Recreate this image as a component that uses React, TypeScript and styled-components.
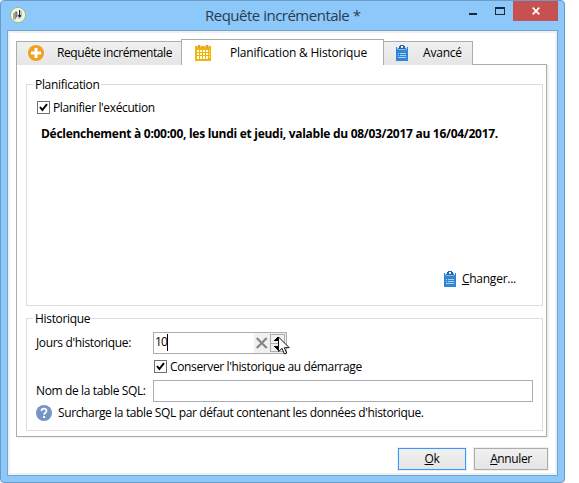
import React from 'react';
import styled, { createGlobalStyle } from 'styled-components';

const GlobalStyle = createGlobalStyle`
  *, *::before, *::after { box-sizing: border-box; }
  body { margin: 0; background: #fff; overflow: hidden; font: 12px/16px "Open Sans", "Noto Sans", sans-serif; color: #000; }
  svg { display: block; flex: none; }
`;

const Window = styled.main`
  width: 565px;
  height: 483px;
  padding: 0 6px 6px;
  display: flex;
  flex-direction: column;
  background: #8dc8fa;
  border: 1px solid #6c9bc4;
  border-radius: 4px;
`;

const TitleBar = styled.header`
  flex: none;
  height: 29px;
  display: flex;
  align-items: flex-start;
`;

const AppIcon = styled.div`
  width: 60px;
  padding: 5px 0 0 2px;
`;

const Title = styled.h1`
  flex: 1;
  margin: 0;
  padding: 4px 0 0 138px;
  font-size: 15px;
  line-height: 20px;
  font-weight: 400;
  letter-spacing: -0.5px;
  color: #2b3d4d;
  white-space: nowrap;
`;

const Controls = styled.div`
  display: flex;
`;

const ControlButton = styled.button<{ $w: number; $close?: boolean }>`
  width: ${p => p.$w}px;
  height: 20px;
  padding: 0;
  border: 0;
  display: flex;
  align-items: center;
  justify-content: center;
  background: ${p => (p.$close ? '#c75050' : 'transparent')};
`;

const Client = styled.section`
  flex: 1;
  min-height: 0;
  display: flex;
  flex-direction: column;
  border: 1px solid #70a5d2;
  box-shadow: inset 0 0 0 2px #f0f0f0;
  background: #fff;
  padding: 8px 0 0 8px;
`;

const Tabs = styled.nav`
  height: 26px;
  display: flex;
  align-items: flex-end;
`;

const Tab = styled.div<{ $w: number; $active?: boolean; $gap: number; $pad: number }>`
  width: ${p => p.$w}px;
  height: ${p => (p.$active ? 26 : 24)}px;
  padding: 0 0 ${p => (p.$active ? 0 : 1)}px ${p => p.$pad}px;
  align-self: ${p => (p.$active ? 'flex-start' : 'flex-end')};
  display: flex;
  align-items: center;
  gap: ${p => p.$gap}px;
  border: 1px solid #acacac;
  border-bottom-width: 0;
  background: ${p => (p.$active ? '#fff' : 'linear-gradient(#f0f0f0, #e5e5e5)')};
  z-index: ${p => (p.$active ? 1 : 0)};

  & + & { margin-left: -1px; }
`;

const Panel = styled.div`
  width: 531px;
  height: 373px;
  margin-top: -1px;
  padding: 12px 3px 0 9px;
  display: flex;
  flex-direction: column;
  gap: 5px;
  border: 1px solid #acacac;
  box-shadow: 2px 1px 0 #f0f0f0;
  background: #fff;
`;

const Group = styled.fieldset<{ $h: number; $top: number }>`
  min-width: 0;
  height: ${p => p.$h}px;
  margin: 0;
  padding: ${p => p.$top}px 9px 0;
  border: 1px solid #dcdcdc;
`;

const Legend = styled.legend`
  height: 15px;
  line-height: 15px;
  margin-left: -3px;
  padding: 0 1px 0 2px;
  letter-spacing: -0.32px;
  white-space: nowrap;
`;

const Text = styled.span<{ $track?: number; $bold?: boolean; $w?: number }>`
  display: block;
  flex: none;
  width: ${p => (p.$w ? `${p.$w}px` : 'auto')};
  letter-spacing: ${p => p.$track ?? -0.37}px;
  font-weight: ${p => (p.$bold ? 700 : 400)};
  white-space: nowrap;
`;

const CheckRow = styled.label<{ $indent: number }>`
  height: 13px;
  margin-left: ${p => p.$indent}px;
  display: flex;
  align-items: center;
  gap: 3px;
`;

const CheckBox = styled.span`
  width: 13px;
  height: 13px;
  border: 1px solid #707070;
  background: #fff;
`;

const Schedule = styled.div`
  height: 150px;
  padding: 12px 0 0 5px;
`;

const LinkButton = styled.button`
  margin: 7px 17px 0 auto;
  padding: 0;
  height: 16px;
  display: flex;
  align-items: center;
  gap: 6px;
  border: 0;
  background: none;
  font: inherit;
  color: inherit;
`;

const Field = styled.div<{ $mt?: number; $mb: number }>`
  height: 22px;
  margin-top: ${p => p.$mt ?? 0}px;
  margin-bottom: ${p => p.$mb}px;
  display: flex;
  align-items: center;
`;

const Entry = styled.div<{ $w: number }>`
  width: ${p => p.$w}px;
  height: 22px;
  display: flex;
  border: 1px solid #abadb3;
  background: #fff;
`;

const EntryValue = styled.span`
  height: 17px;
  margin: 1px auto 0 1px;
  letter-spacing: -0.8px;
  border-right: 1px solid #000;
`;

const SpinArea = styled.div`
  position: relative;
  width: 32px;
  display: flex;
  padding: 1px 1px 1px 2px;
  gap: 2px;
  background: #f0f0f0;
`;

const ClearBox = styled.div`
  width: 12px;
  display: flex;
  align-items: center;
`;

const Spinner = styled.div`
  width: 15px;
  height: 18px;
  display: grid;
  grid-template-rows: 1fr 1fr;
  border: 1px solid #acacac;
  background: #f0f0f0;
`;

const SpinHalf = styled.div`
  display: flex;
  align-items: center;
  justify-content: center;
  & + & { border-top: 1px solid #acacac; }
`;

const Pointer = styled.div`
  position: absolute;
  left: 24px;
  top: 3px;
  z-index: 2;
`;

const HelpRow = styled.div`
  height: 16px;
  display: flex;
  align-items: center;
  gap: 6px;
`;

const Footer = styled.footer`
  display: flex;
  justify-content: flex-end;
  gap: 8px;
  padding: 11px 9px 0 0;
`;

const PushButton = styled.button<{ $w: number; $primary?: boolean }>`
  width: ${p => p.$w}px;
  height: 22px;
  padding: 0;
  display: flex;
  align-items: center;
  justify-content: center;
  border: 1px solid ${p => (p.$primary ? '#3399ff' : '#acacac')};
  box-shadow: 0 0 0 1px #f0f0f0;
  background: linear-gradient(#f0f0f0, #e5e5e5);
  font: inherit;
  color: inherit;
`;

const LogoIcon = () => (
  <svg width="18" height="18" viewBox="0 0 18 18">
    <circle cx="9" cy="9" r="7.6" fill="#f2f4ef" stroke="#9bc365" />
    <path d="M4 7.5l3-2v8H4z" fill="#a3a8a4" />
    <path d="M6.5 5.5h1.8v5l-1.8 2z" fill="#6f7573" />
    <path d="M10.6 4v7M9 9.2l1.6 1.8L12.3 9.200" fill="none" stroke="#222d30" strokeWidth="1.200" />
    <path d="M12.6 5v5.500M8.500 12h4" fill="none" stroke="#b5bcb6" />
  </svg>
);

const PlusIcon = () => (
  <svg width="16" height="16" viewBox="0 0 16 16">
    <circle cx="8" cy="8" r="8" fill="#f0a023" />
    <path d="M6.5 3h3v3.5H13v3H9.5V13h-3V9.5H3v-3h3.5z" fill="#fff" />
  </svg>
);

const CalendarIcon = () => (
  <svg width="16" height="16" viewBox="0 0 16 16" shapeRendering="crispEdges">
    <path d="M0 1h16v15H0z" fill="#eeb60a" />
    <path d="M2 0h4v2H5v1H3V2H2zM10 0h4v2h-1v1h-2V2h-1z" fill="#f7dfb0" />
    <path d="M3 0h2v3H3zM11 0h2v3h-2z" fill="#e9983a" />
    {[5, 8, 11, 13].map(y => [2, 5, 8, 11].map(x => (
      <rect key={`${x}-${y}`} x={x} y={y} width="2" height={y === 13 ? 1 : 2} fill="#fffbe8" />
    )))}
    <path d="M14 5h1v2h-1zM14 8h1v2h-1zM14 11h1v2h-1z" fill="#f8df88" />
  </svg>
);

const ClipboardIcon = () => (
  <svg width="12" height="16" viewBox="0 0 12 16" shapeRendering="crispEdges">
    <path d="M0 2h12v14H0z" fill="#2f86d4" />
    <path d="M1 2h10v2H1z" fill="#d7e6f4" />
    <path d="M2 4h8v1H2z" fill="#8dbbe6" />
    <path d="M4 0h4v1H4zM3 1h2v2H3zM7 1h2v2H7zM2 3h8v1H2z" fill="#2767a5" />
    <path d="M5 1h2v1H5z" fill="#fff" />
    <path d="M2 8h1v1H2zM4 8h6v1H4zM2 10h1v1H2zM4 10h6v1H4zM2 12h8v1H2z" fill="#a9cff2" />
  </svg>
);

const HelpIcon = () => (
  <svg width="16" height="16" viewBox="0 0 16 16">
    <circle cx="8" cy="8" r="8" fill="#7595c6" />
    <path d="M5.500 6C5.500 2.900 10.600 3 10.500 5.800c0 1.800-2.300 1.800-2.400 3.900" fill="none" stroke="#fff" strokeWidth="1.800" />
    <path d="M7.100 11h2v2h-2z" fill="#fff" />
  </svg>
);

const CheckMark = () => (
  <svg width="11" height="11" viewBox="0 0 11 11">
    <path d="M2 5l2.4 3L9 2.2" fill="none" stroke="#000" strokeWidth="2" />
  </svg>
);

const ClearIcon = () => (
  <svg width="12" height="12" viewBox="0 0 12 12">
    <path d="M.7 1l10 10M10.700 1L.7 11" stroke="#858585" strokeWidth="2.200" />
  </svg>
);

const Arrow = ({ down }: { down?: boolean }) => (
  <svg width="7" height="4" viewBox="0 0 7 4" shapeRendering="crispEdges">
    <path d={down ? 'M0 0h7L3.5 4z' : 'M0 4h7L3.5 0z'} fill="#000" />
  </svg>
);

const CursorIcon = () => (
  <svg width="12" height="19" viewBox="0 0 12 19">
    <path d="M.5 1v14.6L4 12.400l2.400 5.600 2.300-1-2.400-5.300h4.900z" fill="#fff" stroke="#111" />
  </svg>
);

const Check = ({ label, indent }: { label: string; indent: number }) => (
  <CheckRow $indent={indent}>
    <CheckBox><CheckMark /></CheckBox>
    <Text>{label}</Text>
  </CheckRow>
);

export default function App() {
  return (
    <>
      <GlobalStyle />
      <Window>
        <TitleBar>
          <AppIcon><LogoIcon /></AppIcon>
          <Title>Requête incrémentale *</Title>
          <Controls>
            <ControlButton $w={26} aria-label="Réduire">
              <svg width="26" height="20" viewBox="0 0 26 20"><path d="M9 12h8v2H9z" fill="#1d2a36" /></svg>
            </ControlButton>
            <ControlButton $w={27} aria-label="Agrandir">
              <svg width="27" height="20" viewBox="0 0 27 20"><path fillRule="evenodd" d="M9 6h10v8H9zM10 8v5h8V8z" fill="#1d2a36" /></svg>
            </ControlButton>
            <ControlButton $w={45} $close aria-label="Fermer">
              <svg width="8" height="8" viewBox="0 0 8 8"><path d="M.7.7l6.6 6.6M7.3.7L.7 7.300" stroke="#fff" strokeWidth="1.700" /></svg>
            </ControlButton>
          </Controls>
        </TitleBar>
        <Client>
          <Tabs>
            <Tab $w={166} $pad={11} $gap={13}><PlusIcon /><Text $track={-0.42}>Requête incrémentale</Text></Tab>
            <Tab $w={203} $pad={13} $gap={19} $active><CalendarIcon /><Text $track={-0.2}>Planification &amp; Historique</Text></Tab>
            <Tab $w={90} $pad={12} $gap={15}><ClipboardIcon /><Text $track={-0.2}>Avancé</Text></Tab>
          </Tabs>
          <Panel>
            <Group $h={229} $top={9}>
              <Legend>Planification</Legend>
              <Check indent={1} label="Planifier l'exécution" />
              <Schedule>
                <Text $bold $track={-0.285}>Déclenchement à 0:00:00, les lundi et jeudi, valable du 08/03/2017 au 16/04/2017.</Text>
              </Schedule>
              <LinkButton><ClipboardIcon /><Text $track={-0.25}><u>C</u>hanger...</Text></LinkButton>
            </Group>
            <Group $h={120} $top={6}>
              <Legend>Historique</Legend>
              <Field $mb={6}>
                <Text $w={117} $track={-0.35}>Jours d'historique:</Text>
                <Entry $w={134}>
                  <EntryValue>10</EntryValue>
                  <SpinArea>
                    <ClearBox><ClearIcon /></ClearBox>
                    <Spinner>
                      <SpinHalf><Arrow /></SpinHalf>
                      <SpinHalf><Arrow down /></SpinHalf>
                    </Spinner>
                    <Pointer><CursorIcon /></Pointer>
                  </SpinArea>
                </Entry>
              </Field>
              <Check indent={118} label="Conserver l'historique au démarrage" />
              <Field $mt={7} $mb={3}>
                <Text $w={117}>Nom de la table SQL:</Text>
                <Entry $w={380} />
              </Field>
              <HelpRow><HelpIcon /><Text>Surcharge la table SQL par défaut contenant les données d'historique.</Text></HelpRow>
            </Group>
          </Panel>
          <Footer>
            <PushButton $w={68} $primary><Text><u>O</u>k</Text></PushButton>
            <PushButton $w={74}><Text><u>A</u>nnuler</Text></PushButton>
          </Footer>
        </Client>
      </Window>
    </>
  );
}
